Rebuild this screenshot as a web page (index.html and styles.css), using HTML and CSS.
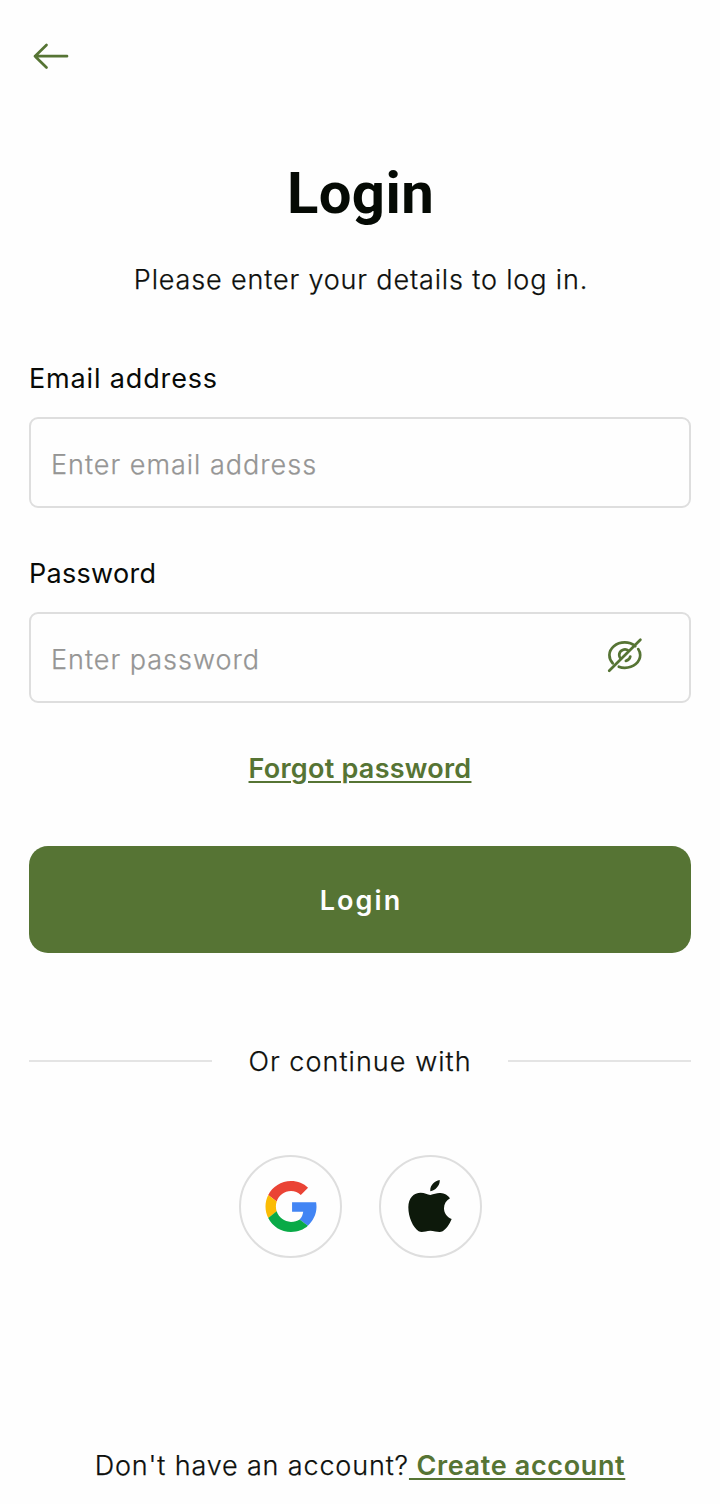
FILE: index.html
```html
<!DOCTYPE html>
<html lang="en">
<head>
<meta charset="utf-8">
<title>Login</title>
<link rel="stylesheet" href="styles.css">
</head>
<body>
<main class="screen">
  <a class="back" href="#" aria-label="Back">
    <svg width="36" height="28" viewBox="0 0 36 28"><path d="M13.5 3 2 14.2 13.5 25.5M2 14.2H34"/></svg>
  </a>
  <h1 class="title">Login</h1>
  <p class="subtitle">Please enter your details to log in.</p>
  <form class="form">
    <div class="label">Email address</div>
    <div class="field"><span>Enter email address</span></div>
    <div class="label tight">Password</div>
    <div class="field"><span>Enter password</span>
      <svg class="eye" width="36" height="36" viewBox="0 0 36 36"><path d="M5.7 26.2C3.4 23.8 2.4 21.3 2.4 18.1 2.4 11.2 9.1 5.4 17.8 5.4c4.4 0 7.7 1.4 10.5 3.7M31.2 12.1c1.4 2 2 3.8 2 6 0 7-6.7 12.7-15.4 12.7-2.2 0-4.1-.3-6-1.1M13.7 21.9c-1-1.2-1.5-2.4-1.5-3.8a5.6 5.6 0 0 1 9.5-4M23.3 19.5c-.5 2.3-2.1 3.9-4.4 4.4M2.2 33.8 33.4 2.7"/></svg>
    </div>
    <a class="forgot" href="#">Forgot password</a>
    <button class="submit" type="button">Login</button>
  </form>
  <div class="divider"><i class="rule"></i><span>Or continue with</span><i class="rule"></i></div>
  <div class="social">
    <a class="circle google" href="#" aria-label="Google">
      <svg width="52" height="51" viewBox="0 0 48 48"><path fill="#ea4335" d="M24 9.5c3.54 0 6.71 1.22 9.21 3.6l6.85-6.85C35.9 2.38 30.47 0 24 0 14.62 0 6.51 5.38 2.56 13.22l7.98 6.19C12.43 13.72 17.74 9.5 24 9.5z"/><path fill="#4285f4" d="M48 24.55c0-1.57-.15-3.09-.38-4.55H25v9.02h10.5c-.58 2.96-1.2 5.48-3.4 7.18l7.73 6C44.3 38 48 31.84 48 24.55z"/><path fill="#fbbc05" d="M10.53 28.59c-.48-1.45-.76-2.99-.76-4.59s.27-3.14.76-4.59l-7.98-6.19C.92 16.46 0 20.12 0 24s.92 7.54 2.56 10.78l7.97-6.19z"/><path fill="#09aa47" d="M24 48c6.48 0 11.93-2.13 15.89-5.81l-7.73-6c-2.15 1.45-4.92 2.3-8.16 2.3-6.26 0-11.57-4.22-13.47-9.91l-7.98 6.19C6.51 42.62 14.62 48 24 48z"/></svg>
    </a>
    <a class="circle apple" href="#" aria-label="Apple">
      <svg width="44" height="52" viewBox="0 0 132 156"><path fill="#0d190b" d="M67 34C65 17 79 3 95 0 97 15 83 31 67 34zM67 45C79 42 87 38 98 39c11 1 22 6 28 16-12 7-18 17-18 30 0 14 9 27 23 32-6 15-16 30-27 37-12 5-23-2-37-2s-23 7-35 2C15 143 1 112 1 82 1 53 18 38 38 38c12 0 20 5 29 7z"/></svg>
    </a>
  </div>
  <p class="signup"><span>Don't have an account?</span><a href="#">&nbsp;Create account</a></p>
</main>
</body>
</html>
```
FILE: styles.css
```css
* { box-sizing: border-box; }
body { margin: 0; background: #fefefe; color: #0d0f0c; font: 300 27px/36px Inter, "Liberation Sans", sans-serif; letter-spacing: 0.85px; }
a { color: #567434; text-decoration: none; }
.screen { display: flex; flex-direction: column; height: 1504px; padding: 42px 29px 0; overflow: hidden; white-space: nowrap; }
.back { height: 28px; margin-left: 4px; }
.back svg { display: block; }
.back path, .eye path { fill: none; stroke: #567434; stroke-width: 2.7; stroke-linecap: round; stroke-linejoin: round; }
.title { margin: 88px 0 0; padding-left: 1px; text-align: center; font: 700 58px/70px Roboto, sans-serif; letter-spacing: 0.4px; color: #050a04; }
.subtitle { margin: 34px 0 0; padding-left: 2px; text-align: center; }
.subtitle, .field, .divider, .signup span { -webkit-text-stroke: 0.25px; }
.form { display: flex; flex-direction: column; margin-top: 63px; }
.label { height: 36px; margin-bottom: 20px; font-weight: 400; color: #080a07; }
.label.tight { letter-spacing: 0.3px; }
.field { display: flex; align-items: center; justify-content: space-between; height: 91px; margin-bottom: 48px; padding: 4px 46px 0 20px; border: 2px solid #dedede; border-radius: 9px; color: #959594; letter-spacing: 1px; }
.eye { margin-top: -9px; }
.forgot { align-self: center; font-weight: 600; letter-spacing: 0.25px; text-decoration: underline; text-decoration-thickness: 2px; text-underline-offset: 3px; }
.submit { height: 107px; margin: 59px 0 0; padding: 2px 0 0 2px; border: 0; border-radius: 19px; background: #567434; color: #fefefe; font: 600 27px/36px Inter, sans-serif; letter-spacing: 2.1px; }
.divider { display: flex; align-items: center; justify-content: space-between; margin-top: 90px; letter-spacing: 1.05px; }
.divider span { position: relative; top: 1px; }
.rule { width: 183px; height: 2px; background: #e4e4e4; }
.social { display: flex; justify-content: center; gap: 37px; margin-top: 76px; }
.circle { display: flex; align-items: center; justify-content: center; width: 103px; height: 103px; border: 2px solid #dedede; border-radius: 50%; }
.google { padding-left: 1px; }
.circle svg { flex: none; }
.apple svg { margin-top: -2px; }
.signup { margin: 190px 0 0; text-align: center; }
.signup a { font-weight: 600; letter-spacing: 0.65px; text-decoration: underline; text-decoration-thickness: 2px; text-underline-offset: 3px; }
```
